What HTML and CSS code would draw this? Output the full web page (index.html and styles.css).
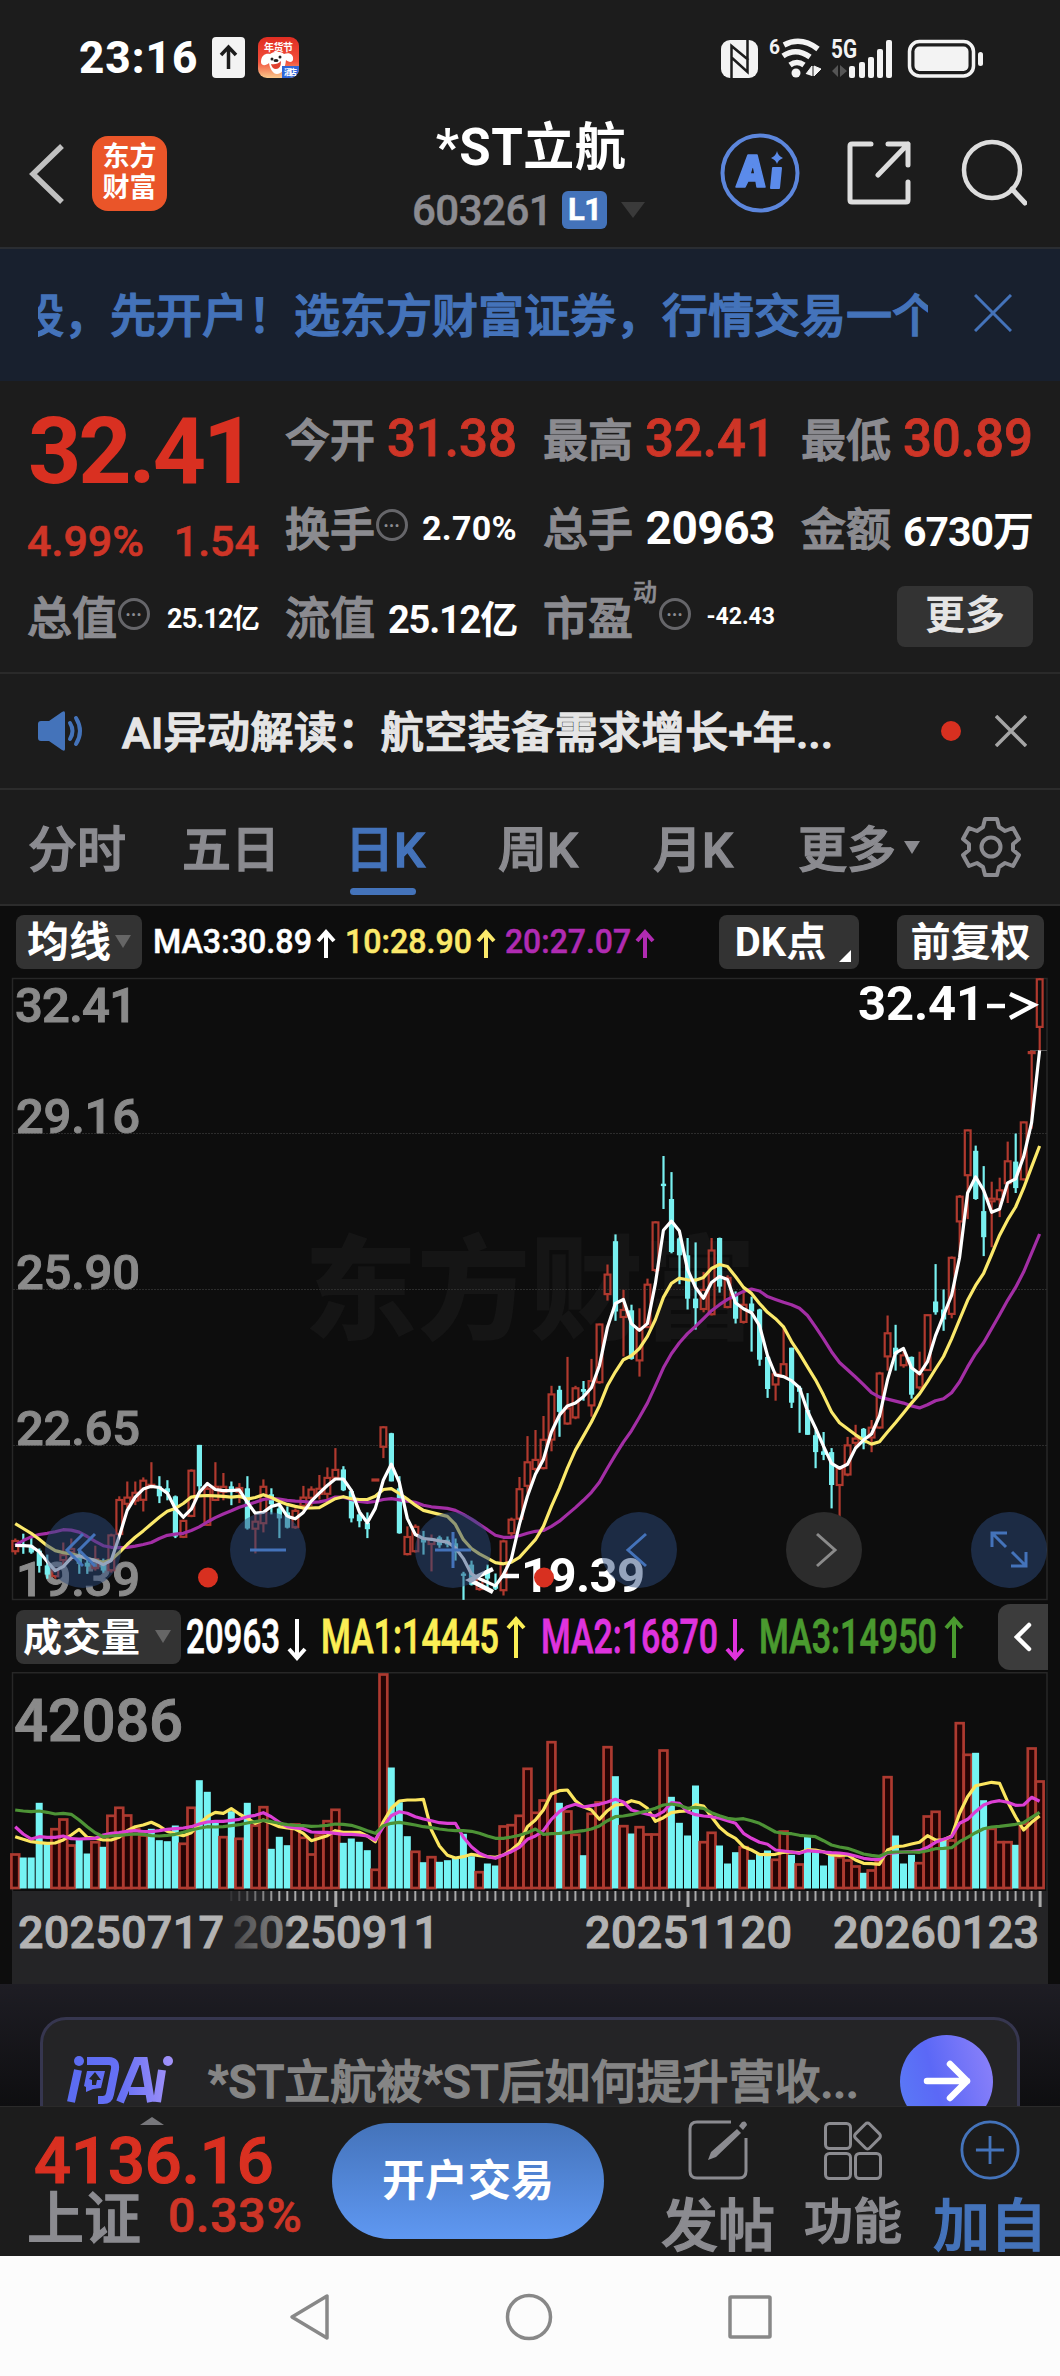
FILE: index.html
```html
<!DOCTYPE html>
<html lang="zh-CN">
<head>
<meta charset="UTF-8">
<meta name="viewport" content="width=device-width, initial-scale=1.0">
<title>*ST立航 603261</title>
<link rel="stylesheet" href="styles.css">
</head>
<body>

<!-- status bar -->
<div class="status">
    <span class="clock">23:16</span>
    <svg class="upload" width="33" height="41" viewBox="0 0 33 41"><rect width="33" height="41" rx="4" fill="#f3f3f3"/><path d="M16.500 32V10M9 18l7.500-8 7.500 8" fill="none" stroke="#1c1c1c" stroke-width="3.500"/></svg>
    <svg class="promo" width="41" height="41" viewBox="0 0 41 41">
        <defs><linearGradient id="promoBg" x2="0" y2="1"><stop offset="0" stop-color="#e02d22"/><stop offset=".6" stop-color="#f2503c"/><stop offset="1" stop-color="#f9c98c"/></linearGradient><clipPath id="promoClip"><rect width="41" height="41" rx="9"/></clipPath></defs>
        <g clip-path="url(#promoClip)">
            <rect width="41" height="41" fill="url(#promoBg)"/>
            <text x="6" y="14" font-size="10" font-weight="700" fill="#fff" textLength="29">年货节</text>
            <path d="M3 25c0-7 5-9 9-8 4-3 11-3 14 0 5-2 10 0 9 6-1 3-5 2-7 0-1 10-5 14-9 14s-7-5-8-11c-3 3-8 3-8-1z" fill="#fff"/>
            <circle cx="14" cy="22" r="1.500" fill="#222"/><circle cx="22" cy="20" r="1.500" fill="#222"/><ellipse cx="18" cy="23.500" rx="2.500" ry="1.600" fill="#222"/>
            <path d="M13 27q6 1 10-3 0 8-5 8-4 0-5-5z" fill="#e0402f"/>
            <rect x="24" y="29" width="17" height="12" fill="#2f66d8"/><text x="26" y="38" font-size="8" font-weight="700" fill="#fff" textLength="13">酒店</text>
        </g>
    </svg>
    <svg class="signals" width="264" height="42" viewBox="0 0 264 42">
        <g fill="#f3f3f3">
            <rect x="1" y="3" width="37" height="38" rx="9"/>
            <path d="M11.500 42V9l17 14M27.500 2v33L11 20" fill="none" stroke="#1c1c1c" stroke-width="2.500"/>
            <text x="49" y="17" font-size="20" font-weight="700" textLength="11" lengthAdjust="spacingAndGlyphs">6</text>
            <path d="M64 8q17-9 34 4M63 19q13-9 27 1M70 28q7-5 14 0" fill="none" stroke="#f3f3f3" stroke-width="5.500"/>
            <circle cx="76" cy="36" r="4.500"/>
            <path d="M86 37l6-8v10M94 29v10l7-7z" stroke="#f3f3f3"/>
            <text x="111" y="21" font-size="25" font-weight="700" textLength="26" lengthAdjust="spacingAndGlyphs">5G</text>
            <path d="M112 34l6-6v12M120 28v12l7-6z" fill="#555"/>
            <rect x="129" y="29" width="6" height="12" rx="2"/><rect x="139" y="25" width="6" height="16" rx="2"/><rect x="148" y="20" width="6" height="21" rx="2"/><rect x="157" y="12" width="6" height="29" rx="2"/><rect x="166" y="3" width="6" height="38" rx="2"/>
            <rect x="189.500" y="4.500" width="64" height="34.500" rx="10" fill="none" stroke="#f3f3f3" stroke-width="3.500"/>
            <rect x="194.500" y="9.500" width="54" height="24.500" rx="5"/>
            <rect x="258" y="15" width="5" height="14" rx="2.500"/>
        </g>
    </svg>
</div>

<!-- header -->
<div class="header">
    <svg class="back" width="36" height="62" viewBox="0 0 36 62"><path d="M33 3L4 31l29 28" fill="none" stroke="#c0c0c0" stroke-width="5.500"/></svg>
    <div class="logo">东方<br>财富</div>
    <div class="stock">
        <div class="stock-name">*ST立航</div>
        <div class="stock-code"><span>603261</span><b>L1</b><i class="tri"></i></div>
    </div>
    <svg class="ai" width="80" height="80" viewBox="0 0 80 80"><circle cx="40" cy="40" r="37.500" fill="none" stroke="#5c86dc" stroke-width="4"/><path d="M28 22h9l8 32h-8l-1-6h-8l-3 6h-9zM33 31l-3 10h5z" fill="#5b8bea" fill-rule="evenodd" stroke="#5b8bea" stroke-width="1.500" stroke-linejoin="round"/><path d="M53 35h8l-2 20h-8z" fill="#5b8bea" stroke="#5b8bea" stroke-width="2" stroke-linejoin="round"/><path d="M57 18q1 5 6 7-5 2-6 6-1-4-6-6 5-2 6-7z" fill="#5b8bea"/></svg>
    <svg class="share" width="64" height="64" viewBox="0 0 64 64"><path d="M24 3H5q-2 0-2 2v54q0 2 2 2h54q2 0 2-2V41M41 3h20v21M61 3L31 34" fill="none" stroke="#ddd" stroke-width="5" stroke-linecap="round" stroke-linejoin="round"/></svg>
    <svg class="search" width="66" height="68" viewBox="0 0 66 68"><circle cx="31" cy="31" r="28" fill="none" stroke="#ddd" stroke-width="4.500"/><path d="M51 50l13 14" stroke="#ddd" stroke-width="5" stroke-linecap="round"/></svg>
</div>

<div class="notice">
    <div class="notice-text"><span>股，先开户！选东方财富证券，行情交易一个</span></div>
    <svg width="38" height="38" viewBox="0 0 38 38"><path d="M1 1l36 36M37 1L1 37" stroke="#4473ba" stroke-width="3"/></svg>
</div>

<!-- quote -->
<div class="quote">
    <div class="price">32.41</div>
    <div class="cell"><label>今开</label><span class="red v50">31.38</span></div>
    <div class="cell"><label>最高</label><span class="red v50">32.41</span></div>
    <div class="cell"><label>最低</label><span class="red v50">30.89</span></div>
    <div class="cell change"><span>4.99%</span><span>1.54</span></div>
    <div class="cell"><label>换手</label><i class="more-dots">•••</i><span class="v33">2.70%</span></div>
    <div class="cell"><label>总手</label><span class="v46">20963</span></div>
    <div class="cell"><label>金额</label><span class="v40">6730万</span></div>
    <div class="cell"><label>总值</label><i class="more-dots">•••</i><span class="v27">25.12亿</span></div>
    <div class="cell"><label>流值</label><span class="v38">25.12亿</span></div>
    <div class="cell"><label>市盈<sup>动</sup></label><i class="more-dots pe">•••</i><span class="v23">-42.43</span></div>
    <div class="more-btn">更多</div>
</div>

<div class="news">
    <svg width="50" height="40" viewBox="0 0 50 40"><path d="M1 13q0-3 3-3h8L25 1q3-2 3 1v36q0 3-3 1l-13-9H4q-3 0-3-3z" fill="#4473ba"/><path d="M33 12q5 8 0 16M39 7q8 13 0 26" fill="none" stroke="#4473ba" stroke-width="4" stroke-linecap="round"/></svg>
    <div class="news-text">AI异动解读：航空装备需求增长+年...</div>
    <i class="dot"></i>
    <svg width="32" height="32" viewBox="0 0 32 32"><path d="M1 1l30 30M31 1L1 31" stroke="#a5a5a5" stroke-width="3.500"/></svg>
</div>

<!-- tabs -->
<div class="tabs">
    <span>分时</span><span>五日</span><span class="active">日K</span><span>周K</span><span>月K</span><span>更多</span><i class="tri"></i>
    <svg width="60" height="60" viewBox="0 0 60 60"><path d="M24 2h12l2 8 6 4 8-3 6 11-6 5v6l6 5-6 11-8-3-6 4-2 8H24l-2-8-6-4-8 3L2 38l6-5v-6l-6-5L8 11l8 3 6-4z" fill="none" stroke="#8b8b90" stroke-width="4" stroke-linejoin="round"/><circle cx="30" cy="30" r="9.500" fill="none" stroke="#8b8b90" stroke-width="4"/></svg>
</div>

<!-- price chart -->
<div class="ma-bar">
    <div class="btn ma-btn"><span>均线</span><i class="tri"></i></div>
    <svg class="legend" width="520" height="54" viewBox="150 0 520 54" id="maLegend"></svg>
    <div class="btn dk-btn"><span>DK点</span><i></i></div>
    <div class="btn"><span>前复权</span></div>
</div>

<svg class="chart" id="price" width="1060" height="624" viewBox="0 0 1060 624">
    <text class="watermark" x="304" y="353" textLength="452">东方财富</text>
    <path d="M12.500 1.500H1047V622.500H12.500z" fill="none" stroke="#272727" stroke-width="1.500"/>
    <path d="M13 156.500H1047M13 312.500H1047M13 468.500H1047" stroke="#2c2c2c" stroke-dasharray="2 1"/>
    <path d="M1030 73.500h17" stroke="#555"/>
    <g class="scale">
        <text x="15" y="45" textLength="122">32.41</text>
        <text x="16" y="156" textLength="124">29.16</text>
        <text x="16" y="312" textLength="124">25.90</text>
        <text x="16" y="468" textLength="124">22.65</text>
        <text x="16" y="619" textLength="124">19.39</text>
    </g>
    <g id="candles"></g>
    <g class="mark">
        <text x="858" y="43" textLength="126">32.41</text>
        <path d="M987 29h18M1010 17l24 11-24 13" />
        <path d="M493 592l-23 11 23 12M502 599h17"/>
        <text x="521" y="615" textLength="124">19.39</text>
    </g>
    <circle cx="208" cy="600.500" r="10" fill="#d83020"/><circle cx="544" cy="600.500" r="10" fill="#d83020"/>
    <g class="tools">
        <circle cx="83" cy="573" r="38"/><circle cx="268" cy="573" r="38"/><circle cx="453" cy="573" r="38"/><circle cx="639" cy="573" r="38"/><circle class="off" cx="824" cy="573" r="38"/><circle cx="1009" cy="573" r="38"/>
        <path d="M83 557l-16 16 16 16M95 557l-16 16 16 16M250 573h36M435 573h36M453 555v36M646 557l-18 16 18 16M992 570v-14h15M992 556l14 14M1026 575v14h-15M1026 589l-14-14"/>
        <path class="off" d="M817 557l18 16-18 16"/>
    </g>
</svg>

<!-- volume -->
<div class="vol-bar">
    <div class="btn vol-btn"><span>成交量</span><i class="tri"></i></div>
    <svg class="legend" width="790" height="54" viewBox="184 0 790 54" id="volLegend"></svg>
    <div class="fold"><svg width="18" height="30" viewBox="0 0 18 30"><path d="M15 3L3 15l12 12" fill="none" stroke="#fff" stroke-width="4.500" stroke-linecap="round"/></svg></div>
</div>
<svg class="chart" id="volume" width="1060" height="312" viewBox="0 0 1060 312">
    <defs>
        <linearGradient id="fade" gradientUnits="userSpaceOnUse" x1="230" y1="0" x2="290" y2="0"><stop offset="0" stop-color="#454547"/><stop offset=".95" stop-color="#8a8a8a"/><stop offset="1" stop-color="#b3b3b3"/></linearGradient>
    </defs>
    <rect x="12" y="219" width="1036" height="93" fill="#242426"/>
    <path d="M12.500 219V.75H1047V219" fill="none" stroke="#272727" stroke-width="1.500"/>
    <text class="peak" x="14" y="69" textLength="169">42086</text>
    <g id="bars"></g>
    <g class="dates">
        <text x="18" y="276" textLength="206">20250717</text>
        <text class="faded" x="233" y="276" textLength="206" fill="url(#fade)">20250911</text>
        <text x="585" y="276" textLength="207">20251120</text>
        <text x="833" y="276" textLength="206">20260123</text>
    </g>
</svg>

<!-- ask AI -->
<div class="ask">
    <div class="ask-card">
        <svg width="108" height="50" viewBox="0 0 108 50">
            <defs><linearGradient id="askFill" gradientUnits="userSpaceOnUse" x1="0" y1="0" x2="108" y2="0"><stop offset="0" stop-color="#5a6cf2"/><stop offset=".5" stop-color="#6670f4"/><stop offset="1" stop-color="#a594f8"/></linearGradient></defs>
            <g fill="none" stroke="url(#askFill)" stroke-width="8">
                <path d="M11 14L4 46M20 5h22q7 0 6 8l-5 25q-1 6-7 6h-5M95 14l-5 32" />
                <path d="M53 46L70 5h7l7 41M62 35h19" />
            </g>
            <g fill="url(#askFill)"><circle cx="12" cy="5" r="5"/><circle cx="101" cy="5" r="5"/><path d="M20 15h18l-4 17-8 1-7 3v-5l-2-1z"/></g>
            <path d="M28 16l6 8h-4l-1 5h-4v-5l-3-1z" fill="#242426"/>
        </svg>
        <span>*ST立航被*ST后如何提升营收...</span>
        <div class="go"><svg width="48" height="42" viewBox="0 0 48 42"><path d="M4 21h40M27 4l17 17-17 17" fill="none" stroke="#fff" stroke-width="6.500" stroke-linecap="round" stroke-linejoin="round"/></svg></div>
    </div>
</div>

<!-- bottom bar -->
<div class="bottom">
    <div class="index">
        <i class="tri up"></i>
        <div class="index-value">4136.16</div>
        <div class="index-row"><span>上证</span><b>0.33%</b></div>
    </div>
    <div class="open-btn">开户交易</div>
    <div class="action post">
        <svg width="60" height="60" viewBox="0 0 60 60"><path d="M43 2H9Q2 2 2 9v42q0 7 7 7h42q7 0 7-7V18" fill="none" stroke="#8b8b90" stroke-width="3"/><path d="M20 40l3-8L49 9l4 4-25 24zM51 6l3-4q4-2 5 3l-4 5z" fill="#8b8b90"/></svg>
        <span>发帖</span>
    </div>
    <div class="action feature">
        <svg width="60" height="60" viewBox="0 0 60 60"><g fill="none" stroke="#8b8b90" stroke-width="3"><rect x="2.500" y="3.500" width="25" height="25" rx="4"/><rect x="2.500" y="33.500" width="25" height="25" rx="4"/><rect x="32.500" y="33.500" width="25" height="25" rx="4"/><rect x="34.500" y="6" width="20" height="20" rx="3" transform="rotate(45 44.500 16)"/></g></svg>
        <span>功能</span>
    </div>
    <div class="action add">
        <svg width="64" height="64" viewBox="0 0 64 64"><circle cx="32" cy="32" r="30" fill="none" stroke="#4473ba" stroke-width="3"/><path d="M17 32h30M32 17v30" stroke="#4473ba" stroke-width="3"/></svg>
        <span>加自</span>
    </div>
</div>

<div class="nav">
    <svg width="42" height="48" viewBox="0 0 42 48"><path d="M39 3v42L4 24z" fill="none" stroke="#888" stroke-width="3.500" stroke-linejoin="round"/></svg>
    <svg width="48" height="48" viewBox="0 0 48 48"><circle cx="24" cy="24" r="21.500" fill="none" stroke="#888" stroke-width="3.500"/></svg>
    <svg width="44" height="44" viewBox="0 0 44 44"><rect x="2" y="2" width="40" height="40" rx="1" fill="none" stroke="#888" stroke-width="3.500"/></svg>
</div>

<script src="chart.js"></script>
</body>
</html>
```
FILE: styles.css
```css
* {
    box-sizing: border-box;
}

body {
    margin: 0;
    width: 1060px;
    background: #0d0d0d;
    color: #fff;
    font-family: Roboto, "Noto Sans CJK SC", sans-serif;
    font-weight: 500;
    overflow-x: hidden;
}

svg {
    display: block;
    flex: none;
}

i {
    font-style: normal;
}

/* thicken the regular CJK weight to medium */
.notice-text,
.cell label,
.news-text,
.tabs span,
.ask-card span,
.index-row span,
.action span {
    -webkit-text-stroke: 1.3px currentColor;
}

/* small drop-down triangle */
.tri {
    border: 8px solid transparent;
    border-top: 13px solid #666;
    border-bottom: 0;
}

/* status bar */
.status {
    display: flex;
    align-items: center;
    height: 115px;
    padding: 0 76px 0 79px;
    background: #1c1c1c;
}

.clock {
    width: 133px;
    font-size: 44px;
    font-weight: 800;
    letter-spacing: 1px;
}

.promo {
    margin-left: 13px;
}

.signals {
    margin-left: auto;
}

/* header */
.header {
    display: flex;
    height: 134px;
    padding: 0 32px 0 29px;
    background: #1c1c1c;
    border-bottom: 2px solid #2a2d32;
}

.back {
    margin-top: 28px;
}

.logo {
    width: 75px;
    height: 75px;
    margin: 21px 0 0 27px;
    padding-top: 6px;
    border-radius: 16px;
    background: #ea5529;
    font-size: 27px;
    line-height: 31px;
    font-weight: 700;
    text-align: center;
}

.stock {
    width: 260px;
    margin-left: 234px;
    text-align: center;
}

.stock-name {
    height: 68px;
    font-size: 51px;
    line-height: 66px;
    font-weight: 700;
    letter-spacing: 0.5px;
}

.stock-code {
    display: flex;
    align-items: center;
    height: 54px;
    padding-left: 11px;
    color: #8b8b90;
    font-size: 42px;
    letter-spacing: -0.5px;
    -webkit-text-stroke: 0.5px currentColor;
}

.stock-code b {
    width: 45px;
    height: 38px;
    margin: 0 14px 0 10px;
    border-radius: 6px;
    background: #4473ba;
    color: #fff;
    font-size: 31px;
    line-height: 38px;
}

.stock-code .tri {
    border-width: 16px 12px 0;
    border-top-color: #3a3a3a;
}

.ai {
    margin: 18px 0 0 59px;
}

.share {
    margin: 26px 0 0 47px;
}

.search {
    margin: 24px 0 0 50px;
}

/* notice */
.notice {
    display: flex;
    align-items: center;
    height: 132px;
    padding: 0 48px 5px 38px;
    background: #18202e;
}

.notice-text {
    width: 890px;
    margin: 0 46px 2px 0;
    overflow: hidden;
    white-space: nowrap;
    color: #4473ba;
    font-size: 46px;
}

.notice-text span {
    margin-left: -20px;
}

/* quote */
.quote {
    display: grid;
    grid-template-columns: repeat(4, 231px);
    grid-template-rows: repeat(3, 89px);
    column-gap: 27px;
    height: 293px;
    padding: 13px 0 0 28px;
    background: #1c1c1c;
    border-bottom: 2px solid #2a2a2a;
}

.price {
    padding-top: 4px;
    color: #d93021;
    font-size: 93px;
    line-height: 108px;
    font-weight: 700;
    letter-spacing: -3px;
}

.cell {
    display: flex;
    align-items: center;
    justify-content: space-between;
    white-space: nowrap;
}

.cell label {
    position: relative;
    left: -1px;
    margin-bottom: 3px;
    color: #8b8b90;
    font-size: 45px;
}

.cell label sup {
    position: absolute;
    left: 90px;
    top: -8px;
    font-size: 24px;
    line-height: 36px;
    -webkit-text-stroke: 0.6px currentColor;
}

.more-dots {
    width: 32px;
    height: 32px;
    margin: 0 auto 6px 0;
    border: 3px solid #66666a;
    border-radius: 50%;
    color: #8b8b90;
    font-size: 13px;
    line-height: 27px;
    letter-spacing: 1px;
    text-align: center;
}

.more-dots.pe {
    margin-left: 25px;
}

.red {
    color: #ce3527;
    -webkit-text-stroke: 0.8px currentColor;
}

.change {
    padding-top: 27px;
    margin-left: -1px;
    color: #ce3527;
    font-size: 43px;
    -webkit-text-stroke: 0.6px currentColor;
}

.v50 {
    font-size: 51px;
}

.v46 {
    font-size: 46px;
    font-weight: 700;
    letter-spacing: -0.5px;
}

.v40 {
    font-size: 41px;
    font-weight: 700;
    letter-spacing: -1px;
}

.v38 {
    font-size: 38px;
    font-weight: 700;
    letter-spacing: -1.2px;
}

.v33 {
    font-size: 34px;
    font-weight: 700;
    letter-spacing: 0.3px;
}

.v27 {
    font-size: 27px;
    font-weight: 700;
    letter-spacing: -0.8px;
}

.v23 {
    font-size: 23px;
    font-weight: 700;
}

.more-btn {
    justify-self: end;
    align-self: center;
    width: 136px;
    height: 61px;
    border-radius: 8px;
    background: #333;
    color: #e5e5e5;
    font-size: 40px;
    line-height: 59px;
    font-weight: 700;
    text-align: center;
}

/* news */
.news {
    display: flex;
    align-items: center;
    height: 116px;
    padding-left: 37px;
    background: #1c1c1c;
    border-bottom: 2px solid #2c2c2c;
}

.news-text {
    width: 819px;
    margin-bottom: 4px;
    padding-left: 35px;
    color: #e5e5e5;
    font-size: 43px;
    letter-spacing: 0.45px;
    white-space: nowrap;
}

.dot {
    width: 20px;
    height: 20px;
    margin: 0 34px 0 35px;
    border-radius: 50%;
    background: #d83020;
}

/* tabs */
.tabs {
    display: flex;
    align-items: center;
    height: 116px;
    padding-left: 28px;
    background: #1c1c1c;
    border-bottom: 2px solid #2c2c2c;
    color: #8b8b90;
    font-size: 49px;
}

.tabs span {
    margin: 0 56px 4px 0;
}

.tabs .active {
    position: relative;
    margin-left: 9px;
    margin-right: 73px;
    color: #4473ba;
}

.tabs .active::after {
    content: "";
    position: absolute;
    left: 5px;
    bottom: -14px;
    width: 66px;
    height: 7px;
    border-radius: 4px;
    background: #4473ba;
}

.tabs span:nth-child(4) {
    margin-right: 75px;
}

.tabs span:nth-child(5) {
    margin-right: 65px;
}

.tabs span:nth-child(6) {
    margin-right: 8px;
}

.tabs .tri {
    margin-right: 41px;
    border-top-color: #8b8b90;
}

/* chart toolbars */
.ma-bar,
.vol-bar {
    display: flex;
    align-items: center;
    height: 71px;
    padding: 0 16px;
}

.vol-bar {
    padding-right: 12px;
}

.btn {
    display: flex;
    align-items: center;
    justify-content: center;
    width: 147px;
    height: 54px;
    border-radius: 8px;
    background: #333;
    font-size: 40px;
    font-weight: 700;
    white-space: nowrap;
}

.btn span {
    margin-bottom: 6px;
}

.ma-btn {
    width: 126px;
    font-size: 42px;
}

.ma-btn .tri {
    margin-left: 4px;
}

.dk-btn {
    position: relative;
    width: 140px;
    margin: 0 38px 0 auto;
    padding-right: 17px;
    font-size: 40px;
}

.dk-btn i {
    position: absolute;
    right: 8px;
    bottom: 7px;
    border: 6px solid #fff;
    border-top-color: transparent;
    border-left-color: transparent;
}

.vol-btn {
    width: 165px;
    padding-right: 3px;
    font-size: 39px;
}

.vol-btn .tri {
    margin-left: 15px;
}

.ma-bar .legend {
    margin-left: 8px;
}

.vol-bar .legend {
    margin-left: 3px;
}

.legend text {
    font-size: 33px;
    stroke-width: 0.5;
}

#volLegend text {
    font-size: 48px;
    stroke-width: 0.8;
}

.fold {
    display: flex;
    align-items: center;
    justify-content: center;
    width: 50px;
    height: 66px;
    margin-left: auto;
    border-radius: 12px 0 0 12px;
    background: #3c3c3c;
}

/* chart text */
.scale {
    fill: #8a8a8a;
    stroke: #8a8a8a;
    stroke-width: 1;
    font-size: 49px;
}

.mark {
    fill: #fff;
    font-size: 49px;
    font-weight: 700;
}

.mark path {
    fill: none;
    stroke: #fff;
    stroke-width: 4.5;
}

.watermark {
    fill: #151515;
    font-size: 113px;
    font-weight: 900;
}

.tools circle {
    fill: #2c4a7c;
    fill-opacity: 0.5;
}

.tools circle.off {
    fill: #2c2c2c;
    fill-opacity: 1;
}

.tools path {
    fill: none;
    stroke: #4473ba;
    stroke-width: 3;
}

.tools path.off {
    stroke: #8b8b8b;
}

.peak {
    fill: #8a8a8a;
    stroke: #8a8a8a;
    stroke-width: 1;
    font-size: 60px;
}

.dates {
    fill: #b3b3b3;
    stroke: #b3b3b3;
    stroke-width: 0.9;
    font-size: 45px;
}

.dates .faded {
    stroke: url(#fade);
}

/* ask AI */
.ask {
    height: 122px;
    padding: 33px 40px 0;
    overflow: hidden;
    background: linear-gradient(#1e1d24, #0e0e10);
}

.ask-card {
    display: flex;
    align-items: center;
    height: 128px;
    padding: 0 24px;
    border: 3px solid #36364f;
    border-radius: 26px;
    background: #242426;
}

.ask-card span {
    margin: 0 0 6px 33px;
    color: #858585;
    font-size: 46px;
    white-space: nowrap;
}

.go {
    display: flex;
    align-items: center;
    justify-content: center;
    width: 93px;
    height: 93px;
    margin-left: auto;
    border-radius: 50%;
    background: linear-gradient(75deg, #5a7cf6, #5b68f6 40%, #8f83fa);
}

/* bottom bar */
.bottom {
    display: flex;
    height: 150px;
    overflow: hidden;
    background: #1c1c1c;
    border-top: 1px solid #2a2a2a;
}

.index {
    position: relative;
    width: 332px;
    padding: 20px 0 0 27px;
    color: #d93021;
}

.index .up {
    position: absolute;
    left: 140px;
    top: 10px;
    border: 12px solid transparent;
    border-top: 0;
    border-bottom: 8px solid #77777b;
}

.index-value {
    padding-left: 7px;
    font-size: 65px;
    line-height: 68px;
    -webkit-text-stroke: 1.2px currentColor;
}

.index-row {
    display: flex;
    align-items: center;
    height: 44px;
}

.index-row span {
    margin: 0 27px 7px 0;
    color: #8b8b90;
    font-size: 57px;
}

.index-row b {
    margin-bottom: 4px;
    color: #ce3527;
    font-size: 48px;
    font-weight: 500;
    letter-spacing: 0.8px;
    -webkit-text-stroke: 0.7px currentColor;
}

.open-btn {
    width: 272px;
    height: 116px;
    margin-top: 16px;
    border-radius: 58px;
    background: linear-gradient(#4473ba, #5f98f2);
    font-size: 43px;
    line-height: 116px;
    font-weight: 700;
    text-align: center;
}

.action {
    display: flex;
    flex-direction: column;
    align-items: center;
    color: #8b8b90;
    font-size: 57px;
    line-height: 70px;
    white-space: nowrap;
}

.action svg {
    height: 60px;
    margin: 13px 0 12px;
}

.post {
    margin-left: 57px;
}

.feature {
    margin-left: 29px;
    font-size: 49px;
    line-height: 54px;
}

.feature svg {
    margin-bottom: 16px;
}

.add {
    margin-left: 31px;
    color: #4473ba;
}

/* android navigation */
.nav {
    display: flex;
    align-items: center;
    justify-content: space-between;
    height: 121px;
    padding: 0 288px;
    background: #fcfcfc;
}
```
FILE: chart.js
```js
var STEP = 8.003, X0 = 15.2;
var RED = '#b0392e', CYAN = '#78f0f0';

// direction, high, body top, body bottom, low
var candles = `u 1415 1420 1448 1455|d 1403 1430 1436 1453|d 1408 1433 1450 1453|d 1440 1445 1483 1500|d 1455 1482 1505 1515|u 1488 1492 1510 1515|u 1425 1455 1470 1485|u 1415 1440 1450 1470|d 1440 1458 1478 1503|d 1460 1475 1485 1503
u 1433 1465 1490 1495|d 1465 1470 1495 1500|u 1403 1406 1495 1500|u 1310 1318 1405 1410|u 1273 1312 1330 1340|u 1273 1300 1322 1332|u 1263 1270 1320 1348|u 1225 1280 1285 1290|d 1260 1285 1310 1327|d 1270 1290 1300 1320
d 1308 1310 1410 1414|u 1368 1370 1412 1414|u 1243 1245 1360 1362|d 1182 1182 1285 1310|u 1275 1290 1382 1384|u 1225 1285 1320 1322|u 1252 1285 1300 1320|d 1273 1285 1298 1332|u 1277 1288 1300 1327|d 1260 1290 1390 1393
u 1355 1372 1392 1452|u 1268 1285 1378 1400|d 1290 1305 1330 1355|d 1325 1340 1365 1414|d 1335 1350 1388 1390|u 1340 1345 1388 1391|u 1284 1312 1335 1345|u 1285 1292 1315 1335|u 1257 1290 1305 1318|u 1238 1263 1305 1320
u 1190 1243 1265 1270|d 1235 1243 1295 1297|d 1293 1297 1365 1375|d 1345 1355 1372 1387|d 1350 1376 1392 1414|u 1267 1267 1268 1270|u 1135 1137 1188 1215|d 1152 1153 1273 1273|d 1260 1290 1402 1403|u 1385 1410 1455 1457
u 1380 1385 1448 1450|d 1396 1412 1425 1455|u 1405 1415 1430 1497|d 1408 1412 1432 1438|d 1410 1418 1430 1437|d 1415 1427 1450 1470|d 1498 1502 1508 1568|d 1470 1480 1530 1532|u 1505 1515 1542 1545|d 1480 1495 1515 1540
d 1502 1530 1540 1543|u 1418 1421 1545 1557|u 1363 1367 1403 1410|u 1262 1291 1367 1370|u 1160 1224 1285 1303|u 1145 1218 1243 1248|u 1110 1168 1241 1243|u 1035 1055 1170 1198|d 1035 1045 1100 1162|u 963 1090 1130 1132
u 1035 1040 1115 1118|d 1023 1043 1050 1072|u 968 1022 1085 1112|u 880 881 1027 1030|u 733 757 808 823|d 658 675 850 873|u 796 845 865 962|d 833 847 968 970|u 842 895 973 1012|u 768 782 890 890
u 625 627 748 752|d 463 532 538 595|d 503 570 702 705|d 665 668 710 782|d 667 710 818 845|d 678 818 842 895|u 752 795 845 852|u 667 697 858 860|d 666 667 788 803|u 760 765 840 842
d 800 808 868 880|u 800 832 877 880|d 813 830 850 950|d 843 845 970 985|d 960 963 1043 1065|u 1000 1005 1033 1072|u 885 980 1013 1015|d 940 940 1077 1090|d 1035 1040 1050 1152|d 1053 1095 1157 1157
d 1145 1158 1200 1240|d 1150 1198 1207 1220|d 1190 1200 1282 1340|u 1235 1240 1283 1365|u 1162 1182 1257 1260|u 1132 1165 1178 1190|d 1140 1142 1178 1193|u 1120 1138 1165 1200|u 1000 1003 1140 1142|u 860 903 963 997
d 883 940 957 997|u 945 958 985 990|d 962 963 1057 1067|u 950 1005 1040 1045|u 857 858 997 998|d 732 825 852 858|d 795 845 870 898|u 713 715 857 867|u 560 563 627 715|u 397 398 512 620
d 437 450 570 572|d 488 600 665 712|u 527 568 577 690|u 517 547 572 615|u 427 475 532 580|d 407 477 543 555|u 377 378 522 524|u 200 203 205 395|u 20 22 143 200`;

var ma3 = '1432 1433 1434 1448 1472 1495 1485 1463 1458 1465 1470 1480 1470 1410 1345 1312 1292 1285 1288 1302 1340 1362 1342 1300 1278 1293 1296 1296 1294 1325 1352 1350 1335 1330 1360 1366 1350 1322 1302 1283 1267 1267 1295 1348 1376 1340 1270 1230 1275 1365 1405 1415 1417 1421 1424 1438 1465 1503 1515 1524 1533 1505 1465 1380 1310 1255 1218 1150 1108 1085 1078 1062 1040 985 890 830 820 880 897 880 780 648 625 650 745 790 817 778 763 770 828 843 853 885 960 1008 1012 1022 1040 1098 1140 1185 1228 1240 1230 1190 1170 1155 1110 1020 953 942 990 1005 975 910 860 810 715 555 515 548 603 595 530 520 465 380 200';
var ma10 = '1378 1390 1402 1417 1433 1445 1450 1453 1458 1465 1469 1474 1468 1450 1430 1412 1396 1379 1362 1347 1340 1328 1312 1309 1308 1309 1310 1312 1310 1317 1313 1306 1313 1323 1330 1335 1339 1339 1338 1327 1316 1311 1316 1318 1318 1310 1293 1291 1303 1317 1332 1345 1350 1355 1360 1380 1418 1440 1453 1464 1475 1478 1474 1462 1440 1418 1385 1335 1290 1240 1195 1160 1125 1085 1035 1000 970 960 942 912 870 815 780 767 771 772 765 743 733 738 763 790 805 830 852 868 888 925 955 988 1020 1058 1100 1127 1142 1157 1170 1180 1174 1150 1127 1103 1078 1055 1025 993 962 918 870 822 785 755 708 660 622 590 543 490 438';
var ma20 = '1432 1420 1411 1405 1402 1398 1393 1394 1399 1410 1422 1433 1437 1438 1437 1434 1430 1425 1415 1407 1404 1402 1395 1386 1374 1363 1354 1346 1337 1331 1325 1318 1315 1317 1320 1322 1323 1325 1324 1320 1312 1312 1318 1323 1325 1323 1318 1316 1319 1322 1325 1332 1336 1338 1340 1345 1355 1367 1380 1393 1407 1412 1412 1408 1402 1397 1395 1385 1372 1355 1338 1320 1300 1275 1240 1207 1175 1147 1113 1078 1035 990 955 928 905 887 868 848 833 820 810 800 794 799 813 820 827 833 842 860 888 918 950 977 995 1013 1032 1052 1063 1068 1073 1078 1085 1090 1082 1072 1067 1052 1025 988 955 928 893 858 822 790 752 705 657';

var volumes = 'u792 d804 d804 d640 d760 u716 u687 u765 d750 d792 u755 d772 u676 u652 u675 u716 u735 d718 d752 d755 d708 u760 u652 d572 d607 d700 u740 d665 u745 d640 u705 u650 d778 d742 d767 u702 u742 u792 u735 u692 u658 d760 d747 d757 d782 u838 u252 d534 d638 d740 u784 d818 u800 d817 d812 d805 d733 d800 u845 d822 d828 u708 u704 u676 u535 u667 u630 u455 d640 u663 u733 d797 u670 u636 u470 d560 u707 d732 u710 u732 u732 u480 d622 d700 d738 d588 u755 u727 d768 d822 d788 u770 d811 d792 d783 u808 u723 d796 u822 d742 d788 d828 d797 u800 u810 u828 d850 u840 u815 u560 d738 d822 d796 u818 u678 u664 d750 u750 u398 u493 d490 d632 u715 u755 u755 d766 u700 u474 u573';
var vol5 = '740 748 755 758 760 759 750 735 718 742 745 750 750 742 722 710 705 697 708 724 732 737 728 702 680 667 670 656 672 685 700 690 700 710 714 717 730 752 745 737 722 727 727 727 738 755 695 655 633 630 630 628 720 768 796 804 800 793 797 800 802 795 780 760 710 690 660 612 602 600 632 650 660 688 662 645 643 632 638 655 694 683 668 664 663 644 648 680 712 732 745 770 780 793 794 793 787 786 788 779 780 785 795 796 795 810 820 821 823 780 770 768 762 757 737 750 750 738 670 620 587 582 577 580 635 680 720 697 678';
var vol10 = '710 732 747 740 742 742 738 746 747 746 745 735 730 728 724 722 725 725 722 718 716 714 710 702 696 694 694 691 688 680 676 668 680 697 710 714 716 726 727 727 730 733 733 735 738 750 710 677 665 670 680 687 692 698 700 700 742 770 790 800 805 795 785 772 748 738 722 688 665 650 643 651 647 643 636 628 636 660 667 673 678 665 638 640 665 674 678 680 685 692 700 730 745 757 763 780 783 786 790 782 784 786 788 789 792 798 805 808 808 790 788 786 785 782 772 757 748 740 700 688 665 645 636 632 637 646 645 622 634';
var vol20 = '660 663 665 663 667 672 670 673 690 710 728 740 738 736 734 732 733 737 738 736 733 727 720 715 710 711 710 707 704 699 695 691 695 700 704 706 707 709 708 706 702 703 706 713 722 730 707 700 697 701 705 710 713 717 720 722 722 724 730 738 745 745 741 736 728 717 733 731 730 728 725 722 717 708 692 680 678 674 668 662 655 645 642 646 655 652 655 668 677 685 688 686 692 700 713 726 730 731 736 738 740 752 765 771 775 783 792 796 799 788 786 786 786 787 782 776 775 773 755 742 728 716 711 709 706 703 698 682 667';

function px(i) { return X0 + i * STEP; }
function priceY(v) { return v / 2.489 - 7; }
function volY(v) { return v / 3 - 82; }

function line(data, toY, color) {
    var pts = data.split(' ').map(function (v, i) {
        return px(i).toFixed(1) + ',' + toY(+v).toFixed(1);
    });
    return '<polyline points="' + pts.join(' ') + '" fill="none" stroke="' + color + '" stroke-width="3.2" stroke-linejoin="round"/>';
}

function rect(x, y, w, h, attrs) {
    return '<rect x="' + x.toFixed(1) + '" y="' + y.toFixed(1) + '" width="' + w + '" height="' + h.toFixed(1) + '" ' + attrs + '/>';
}

// candles
var out = '';
candles.split(/[|\n]/).forEach(function (row, i) {
    var c = row.split(' ');
    var x = px(i), hi = priceY(+c[1]), top = priceY(+c[2]), bot = priceY(+c[3]), lo = priceY(+c[4]);
    if (c[0] === 'u') {
        out += rect(x - 1, hi, 2.2, Math.max(top - hi, 0), 'fill="' + RED + '"');
        out += rect(x - 1, bot, 2.2, Math.max(lo - bot, 0), 'fill="' + RED + '"');
        out += rect(x - 2.8, top + 0.5, 5.8, Math.max(bot - top - 1, 1), 'fill="none" stroke="' + RED + '" stroke-width="2.2"');
    } else {
        out += rect(x - 1, hi, 2.2, lo - hi, 'fill="' + CYAN + '"');
        out += rect(x - 2.5, top, 5.2, Math.max(bot - top, 2), 'fill="' + CYAN + '"');
    }
});
out += line(ma20, priceY, '#a32ea5') + line(ma10, priceY, '#fbe96b') + line(ma3, priceY, '#fff');
document.getElementById('candles').innerHTML = out;

// volume bars and the day ticks under them
out = '';
volumes.split(' ').forEach(function (v, i) {
    var x = px(i), top = volY(+v.slice(1));
    if (v[0] === 'u') {
        out += rect(x - 3.8, top + 0.5, 7.8, 215.5 - top, 'fill="#240404" stroke="#ad3a30" stroke-width="2.7"');
    } else {
        out += rect(x - 3.5, top - 0.5, 7, 217 - top, 'fill="#75f4f4"');
    }
    if (i >= 27) {
        var big = i === 40 || i === 84 || i === 128;
        out += rect(x - 1, 219, big ? 3 : 2, big ? 16 : 10, 'fill="#aaa" opacity="' + Math.min(1, (i - 26) / 7).toFixed(2) + '"');
    }
});
out += line(vol5, volY, '#fbe55f') + line(vol10, volY, '#dc3fd4') + line(vol20, volY, '#4d9336');
document.getElementById('bars').innerHTML = out;

// legends: text, left, right, color, arrow
function legend(id, items, base, head) {
    document.getElementById(id).innerHTML = items.map(function (t) {
        var ax = t[2] + (id === 'volLegend' ? 17 : 14), up = t[4] === 'up';
        var y1 = up ? head : base + 5, y2 = up ? base + 5 : head, d = up ? 9 : -9;
        return '<text x="' + t[1] + '" y="' + base + '" textLength="' + (t[2] - t[1]) + '" lengthAdjust="spacingAndGlyphs" fill="' + t[3] + '" stroke="' + t[3] + '">' + t[0] + '</text>' +
            '<path d="M' + ax + ' ' + y1 + 'V' + y2 + 'M' + (ax - 8) + ' ' + (y1 + d) + 'L' + ax + ' ' + y1 + 'L' + (ax + 8) + ' ' + (y1 + d) + '" fill="none" stroke="' + t[3] + '" stroke-width="4"/>';
    }).join('');
}
legend('maLegend', [
    ['MA3:30.89', 153, 312, '#fff', 'up'],
    ['10:28.90', 345, 472, '#fbe96b', 'up'],
    ['20:27.07', 505, 631, '#b02bb2', 'up']
], 38, 17);
legend('volLegend', [
    ['20963', 186, 280, '#fff', 'down'],
    ['MA1:14445', 321, 499, '#fbee55', 'up'],
    ['MA2:16870', 541, 718, '#df33de', 'down'],
    ['MA3:14950', 759, 937, '#4a9a2f', 'up']
], 43, 9);
```
